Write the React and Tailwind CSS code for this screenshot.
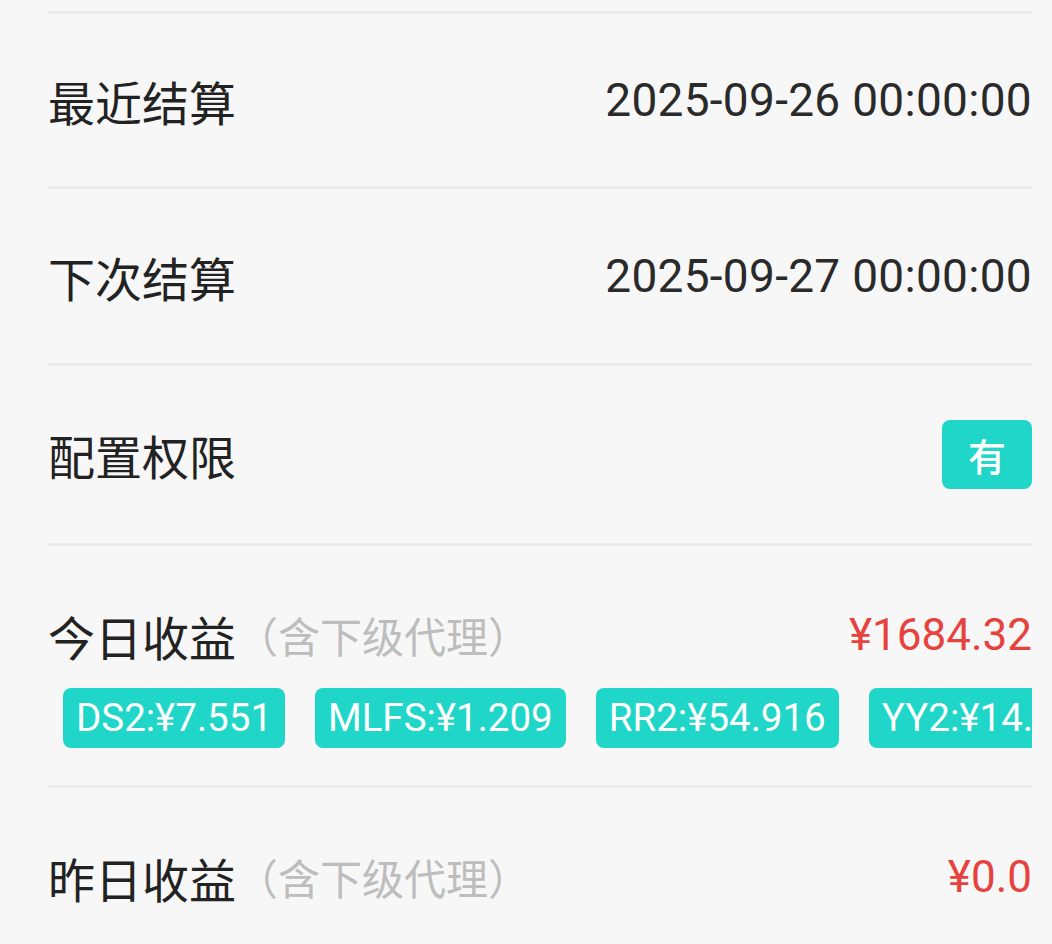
import React from "react";

const FONT = { fontFamily: '"Roboto", "Noto Sans CJK SC", sans-serif' };
const CJK = { fontFamily: '"Noto Sans CJK SC", sans-serif' };

const Divider = () => <div className="h-[3px] bg-[#ebebeb]" />;

const Row = ({ label, children, height }) => (
  <div className={`flex items-center justify-between ${height}`}>
    <span className="text-[47px] leading-none text-[#222]" style={CJK}>
      {label}
    </span>
    {children}
  </div>
);

const Label = ({ text }) => (
  <span className="flex items-center leading-none" style={CJK}>
    <span className="text-[47px] text-[#222]">{text}</span>
    <span className="text-[42px] text-[#bdbdbd]">（含下级代理）</span>
  </span>
);

const tags = ["DS2:¥7.551", "MLFS:¥1.209", "RR2:¥54.916", "YY2:¥14.388"];

export default function App() {
  return (
    <div className="min-h-[944px] bg-[#f7f7f7] pl-[48px] pr-[20px] overflow-hidden" style={FONT}>
      <div className="h-[11px]" />
      <Divider />
      <Row label="最近结算" height="h-[172px]">
        <span className="text-[46px] leading-none text-[#2a2a2a] tracking-[0.3px]" style={FONT}>
          2025-09-26 00:00:00
        </span>
      </Row>
      <Divider />
      <Row label="下次结算" height="h-[174px]">
        <span className="text-[46px] leading-none text-[#2a2a2a] tracking-[0.3px]" style={FONT}>
          2025-09-27 00:00:00
        </span>
      </Row>
      <Divider />
      <Row label="配置权限" height="h-[177px]">
        <span
          className="flex h-[69px] w-[90px] items-center justify-center rounded-[8px] bg-[#1fd6c9] text-[38px] font-medium text-white"
          style={CJK}
        >
          有
        </span>
      </Row>
      <Divider />
      <div className="pt-[63px] pb-[37px]">
        <div className="flex h-[52px] items-center justify-between">
          <Label text="今日收益" />
          <span className="text-[44px] leading-none text-[#e6433e]" style={FONT}>¥1684.32</span>
        </div>
        <div className="mt-[27px] flex overflow-x-auto [scrollbar-width:none]">
          {tags.map((t) => (
            <span
              key={t}
              className="mx-[15px] flex h-[60px] shrink-0 items-center rounded-[8px] bg-[#1fd6c9] px-[13px] text-[38.5px] leading-none text-white"
              style={FONT}
            >
              {t}
            </span>
          ))}
        </div>
      </div>
      <Divider />
      <div className="flex h-[178px] items-center justify-between">
        <Label text="昨日收益" />
        <span className="text-[44px] leading-none text-[#e6433e]" style={FONT}>¥0.0</span>
      </div>
    </div>
  );
}
